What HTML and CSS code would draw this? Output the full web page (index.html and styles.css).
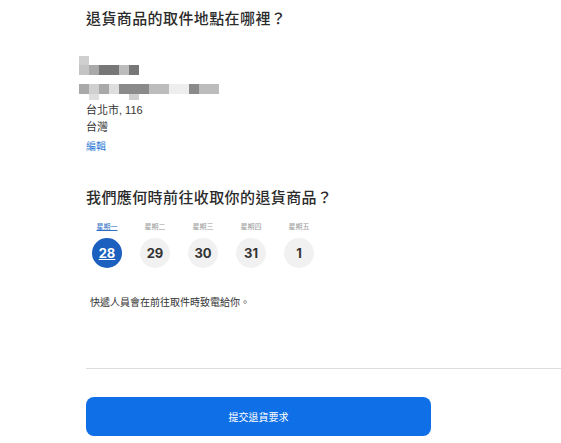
FILE: index.html
```html
<!DOCTYPE html>
<html lang="zh-Hant">
<head>
  <meta charset="UTF-8">
  <title>退貨取件</title>
  <link rel="stylesheet" href="styles.css">
</head>
<body>

<div id="page">
  <h2 class="title">退貨商品的取件地點在哪裡？</h2>

  <div id="address">
    <div class="blur">
      <div class="blur-row r1">
        <span class="px c2"></span>
      </div>
      <div class="blur-row r2">
        <span class="px c3"></span>
        <span class="px c5"></span>
        <span class="px c7 w2"></span>
        <span class="px c4"></span>
        <span class="px c7"></span>
      </div>
      <div class="blur-row r3">
        <span class="px c5"></span>
        <span class="px c2"></span>
        <span class="px c5"></span>
        <span class="px c1"></span>
        <span class="px c6 w3"></span>
        <span class="px c4 w2"></span>
        <span class="px c0 w2"></span>
        <span class="px c6"></span>
        <span class="px c4 w2"></span>
      </div>
      <div class="blur-row r4">
        <span class="px gap1"></span>
        <span class="px c1"></span>
        <span class="px gap3"></span>
        <span class="px c2"></span>
      </div>
    </div>
    <div class="line">台北市, 116</div>
    <div class="line">台灣</div>
    <a class="edit" href="#">編輯</a>
  </div>

  <h2 class="title second">我們應何時前往收取你的退貨商品？</h2>

  <div id="days">
    <div class="day active">
      <span class="weekday">星期一</span>
      <span class="date">28</span>
    </div>
    <div class="day">
      <span class="weekday">星期二</span>
      <span class="date">29</span>
    </div>
    <div class="day">
      <span class="weekday">星期三</span>
      <span class="date">30</span>
    </div>
    <div class="day">
      <span class="weekday">星期四</span>
      <span class="date">31</span>
    </div>
    <div class="day">
      <span class="weekday">星期五</span>
      <span class="date">1</span>
    </div>
  </div>

  <p class="note">快遞人員會在前往取件時致電給你。</p>

  <hr class="divider">

  <button id="submit">提交退貨要求</button>
</div>

</body>
</html>
```

FILE: styles.css
```css
body {
  margin: 0;
  background: #fff;
  font-family: "Liberation Sans", "Noto Sans CJK TC", sans-serif;
  color: #333;
}

#page {
  padding: 6px 0 0 86px;
}

.title {
  margin: 0;
  font-family: "Noto Sans CJK TC", sans-serif;
  font-size: 15px;
  font-weight: 500;
  letter-spacing: 0.4px;
  line-height: 24px;
  color: #2b2b2b;
}

.title.second {
  margin-top: 31px;
}

#address {
  margin-top: 25px;
}

.blur {
  margin-left: -7px;
  display: flex;
  flex-direction: column;
}

.blur-row {
  display: flex;
}

.r1 { height: 9px; margin-top: 1px; }
.r2 { height: 10px; }
.r3 { height: 10px; margin-top: 9px; }
.r4 { height: 6px; }

.px {
  display: block;
  width: 10px;
  height: 100%;
}

.w2 { width: 20px; }
.w3 { width: 30px; }
.gap1 { width: 10px; }
.gap3 { width: 30px; }

.c0 { background: #eeeeee; }
.c1 { background: #dedede; }
.c2 { background: #cfcfcf; }
.c3 { background: #c4c4c4; }
.c4 { background: #bcbcbc; }
.c5 { background: #a9a9a9; }
.c6 { background: #8a8a8a; }
.c7 { background: #777; }

.line {
  font-size: 11px;
  line-height: 17px;
  color: #333;
}

.blur + .line {
  margin-top: 2px;
}

.edit {
  display: inline-block;
  margin-top: 2px;
  font-size: 10px;
  color: #2f7bd6;
  text-decoration: none;
}

#days {
  display: flex;
  gap: 18px;
  margin: 12px 0 0 6px;
}

.day {
  width: 30px;
  display: flex;
  flex-direction: column;
  align-items: center;
  gap: 7px;
}

.weekday {
  font-family: "Noto Sans CJK TC", sans-serif;
  font-size: 7px;
  line-height: 10px;
  color: #999;
  white-space: nowrap;
}

.day.active .weekday {
  color: #2f6fc8;
  text-decoration: underline;
}

.date {
  width: 30px;
  height: 30px;
  border-radius: 50%;
  background: #f1f1f1;
  display: flex;
  align-items: center;
  justify-content: center;
  font-family: "Inter", "Liberation Sans", sans-serif;
  font-size: 13px;
  font-weight: 700;
  color: #333;
}

.day.active .date {
  background: #1b5fbf;
  color: #fff;
  text-decoration: underline;
}

.note {
  margin: 27px 0 0 4px;
  font-family: "Noto Sans CJK TC", sans-serif;
  font-size: 10px;
  line-height: 14px;
  color: #333;
}

.divider {
  margin: 59px 0 0 0;
  border: none;
  border-top: 1px solid #ddd;
}

#submit {
  display: block;
  margin-top: 28px;
  width: 345px;
  height: 39px;
  border: none;
  border-radius: 8px;
  background: #0f6fe6;
  color: #fff;
  font-family: "Noto Sans CJK TC", sans-serif;
  font-size: 10px;
  cursor: pointer;
}
```
